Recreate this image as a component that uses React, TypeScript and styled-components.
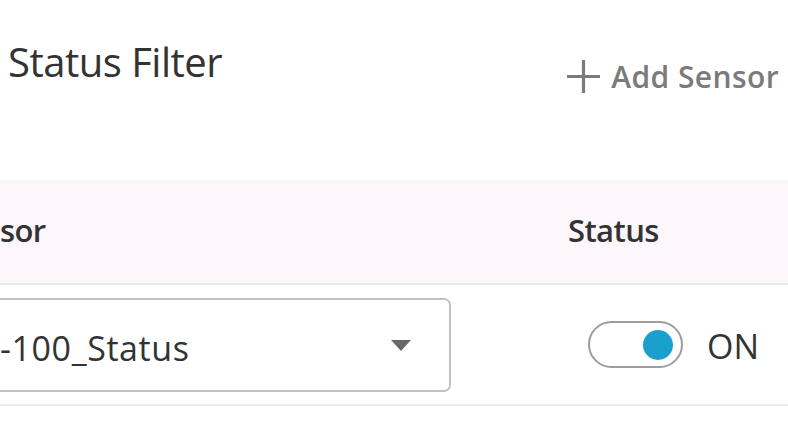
import React, { useState } from "react";
import styled, { createGlobalStyle } from "styled-components";

const GlobalStyle = createGlobalStyle`
  html, body {
    margin: 0;
    padding: 0;
    background: #ffffff;
    overflow: hidden;
  }
  body {
    font-family: "Open Sans", "Noto Sans", sans-serif;
    color: #333333;
  }
`;

const Page = styled.div`
  width: 788px;
  height: 444px;
  background: #ffffff;
`;

const TitleBar = styled.div`
  height: 180px;
  box-sizing: border-box;
  padding: 42px 9px 0 8px;
  display: flex;
  justify-content: space-between;
  align-items: flex-start;
`;

const Title = styled.h1`
  margin: 0;
  font-size: 40px;
  font-weight: 400;
  line-height: 1;
  letter-spacing: -0.5px;
  color: #333333;
`;

const AddButton = styled.button`
  margin-top: 17px;
  padding: 0;
  border: none;
  background: none;
  display: flex;
  align-items: center;
  gap: 10px;
  font-family: inherit;
  font-size: 30px;
  font-weight: 600;
  line-height: 1;
  letter-spacing: 0.4px;
  color: #7b7b7b;
  cursor: pointer;
`;

const Row = styled.div<{ $header?: boolean }>`
  display: grid;
  grid-template-columns: 567px 1fr;
  height: ${(p) => (p.$header ? "103px" : "119px")};
  background: ${(p) => (p.$header ? "#fdf7fc" : "#ffffff")};
  border-bottom: 2px solid ${(p) => (p.$header ? "#ebe8ea" : "#eeeeee")};
`;

const HeadCell = styled.div<{ $pad?: number }>`
  padding-top: 35px;
  padding-left: ${(p) => p.$pad ?? 0}px;
  font-size: 31px;
  font-weight: 600;
  line-height: 1;
  letter-spacing: -0.6px;
  color: #333333;
`;

const Cell = styled.div<{ $pad?: number }>`
  display: flex;
  align-items: center;
  padding-left: ${(p) => p.$pad ?? 0}px;
`;

const Select = styled.div`
  width: 451px;
  height: 94px;
  margin-top: 1px;
  box-sizing: border-box;
  border: 2px solid #c2c2c2;
  border-left: none;
  border-radius: 0 7px 7px 0;
  display: flex;
  align-items: center;
  justify-content: space-between;
  padding: 6px 38px 0 0;
  font-size: 34px;
  line-height: 1;
  letter-spacing: 0.6px;
  color: #333333;
`;

const Caret = styled.span`
  width: 0;
  height: 0;
  border-left: 10px solid transparent;
  border-right: 10px solid transparent;
  border-top: 11px solid #686868;
  margin-top: -6px;
`;

const Track = styled.button`
  position: relative;
  width: 95px;
  height: 47px;
  box-sizing: border-box;
  border: 2px solid #9d9d9d;
  border-radius: 24px;
  background: #ffffff;
  padding: 0;
  cursor: pointer;
`;

const Knob = styled.span<{ $on: boolean }>`
  position: absolute;
  top: 6.5px;
  left: ${(p) => (p.$on ? "53px" : "8px")};
  width: 30px;
  height: 30px;
  border-radius: 50%;
  background: ${(p) => (p.$on ? "#1ba0cd" : "#9d9d9d")};
`;

const StateLabel = styled.span`
  margin-left: 24px;
  font-size: 34px;
  line-height: 1;
  padding-top: 2px;
  color: #333333;
`;

const PlusIcon = () => (
  <svg width="35" height="35" viewBox="0 0 35 35">
    <path d="M17.5 1v33M1 17.5h33" stroke="#7b7b7b" strokeWidth="3.2" fill="none" />
  </svg>
);

export default function App() {
  const [on, setOn] = useState(true);
  return (
    <Page>
      <GlobalStyle />
      <TitleBar>
        <Title>Status Filter</Title>
        <AddButton>
          <PlusIcon />
          Add Sensor
        </AddButton>
      </TitleBar>
      <Row $header>
        <HeadCell>sor</HeadCell>
        <HeadCell $pad={1}>Status</HeadCell>
      </Row>
      <Row>
        <Cell>
          <Select>
            -100_Status
            <Caret />
          </Select>
        </Cell>
        <Cell $pad={21}>
          <Track onClick={() => setOn(!on)}>
            <Knob $on={on} />
          </Track>
          <StateLabel>{on ? "ON" : "OFF"}</StateLabel>
        </Cell>
      </Row>
    </Page>
  );
}
